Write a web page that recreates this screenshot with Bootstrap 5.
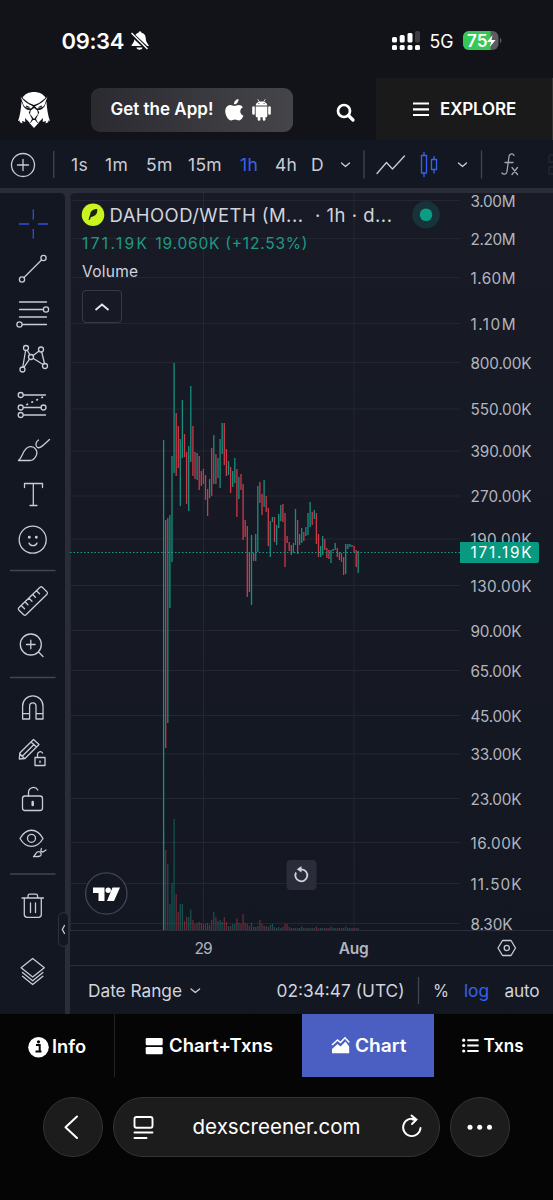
<!DOCTYPE html>
<html lang="en">
<head>
<meta charset="utf-8">
<meta name="viewport" content="width=device-width, initial-scale=1">
<title>DAHOOD/WETH</title>
<link href="https://cdn.jsdelivr.net/npm/bootstrap@5.3.0/dist/css/bootstrap.min.css" rel="stylesheet">
<style>
body{font-family:Inter,"Liberation Sans",sans-serif;background:#050506;color:#d1d4dc;width:553px;height:1200px;overflow:hidden;line-height:1}
svg{display:block;flex:none;overflow:visible}
.ln{fill:none;stroke:#c9ccd6;stroke-width:1.3;stroke-linecap:round;stroke-linejoin:round}
.topbg{background:#121219;color:#fff}
.status{height:78px}
.clock{font-size:22px;font-weight:600;letter-spacing:-.35px;width:68px;padding-left:61.5px;padding-top:3px;box-sizing:content-box}
.site-head{height:62px}
.app-btn{width:202px;height:44px;margin-top:9.5px;border-radius:9px;background:linear-gradient(90deg,#2b2a30,#454449);font-weight:600;font-size:17px;padding-left:19.5px}
.app-btn span{width:113.5px}
.explore{width:177px;background:#1a1a1a;border-right:1px solid #333;font-weight:600;font-size:17px;letter-spacing:-.15px}
.tools{height:48px;background:#131722;display:grid;grid-template-columns:53px 18px 34px 41px 42px 52px 35px 36px 26px 28px 112px 76px;font-size:17.5px;color:#c9ccd6;letter-spacing:.3px}
.tools span{padding-top:2px}
.tools .on{color:#3662f0}
.work{background:#2a2d38;height:826px;padding-top:5px}
.side{width:65px;background:#131722;border-top-right-radius:5px}
.toggle-tab{left:58px;top:724px;width:11px;height:35px;background:#131722;border:1px solid #2f323d;border-radius:6px}
.chart{width:483px;border-top-left-radius:5px;background:linear-gradient(#181b26,#131722)}
.legend{left:11px;top:10px}
.sym{height:24px}
.coll{width:40px;height:33px;margin:3px 0 0 1px;border:1px solid #363a45;border-radius:4px}
.axis-t{height:36px;border-top:1px solid #2a2e39;border-bottom:1px solid #2a2e39}
.foot{height:48px}
.tabs{height:63px;color:#fff;font-weight:600;font-size:18px}
.tabs>div{display:flex;align-items:center}
.t1{width:115px;border-right:1px solid #222;padding-left:28px}
.t2{width:187px;padding-left:31px}
.t3{width:132px;background:#4a5fc1;padding-left:30px}
.t4{padding-left:28px}
.browser{padding:20px 43px 0}
.pill{height:60px;border-radius:30px;background:#1c1c1c;border:1px solid #343434;color:#fff}
.rnd{width:60px}
.addr{width:327px;margin:0 10px}
text{font-family:Inter,"Liberation Sans",sans-serif}
</style>
</head>
<body>
<header class="topbg">
  <div class="status d-flex align-items-center">
    <div class="clock">09:34</div>
    <svg width="262" height="78" viewBox="129.500 0 262 78"><path fill="#fff" d="M131 46c0-2 3-3 3-8 0-3 2-5 4-5.300a1.500 1.500 0 0 1 3 0c3 .6 4.300 3 4.300 6 0 4 3 5.300 3 7.300zM136 47.500h6c-.5 3-5.500 3-6 0z"/><path d="M130 33l18 17" stroke="#121219" stroke-width="4"/><path d="M131 33l16 16" stroke="#fff" stroke-width="1.500"/></svg>
    <svg width="161" height="78" viewBox="392 0 161 78"><g fill="#fff"><rect x="392" y="37" width="5" height="5.500" rx="1.500"/><rect x="399.700" y="35" width="5" height="7.500" rx="1.500"/><rect x="407.500" y="33" width="5" height="9.500" rx="1.500"/><rect x="415" y="31" width="5" height="11.500" rx="1.500" fill="#3c3c42"/><rect x="392" y="45" width="5" height="5" rx="1.500"/><rect x="399.700" y="45" width="5" height="5" rx="1.500"/><rect x="407.500" y="45" width="5" height="5" rx="1.500"/><rect x="415" y="45" width="5" height="5" rx="1.500"/></g><text x="429.500" y="48.300" font-size="18.500" fill="#fff" textLength="24" lengthAdjust="spacingAndGlyphs">5G</text><rect x="463" y="31" width="35.500" height="19" rx="6" fill="#5b5b60"/><path d="M469 31h21.500v19H469a6 6 0 0 1-6-6v-7a6 6 0 0 1 6-6z" fill="#34c759"/><path d="M500 37.500q3 3 0 6z" fill="#5b5b60"/><text x="467" y="46.600" font-size="17" font-weight="600" fill="#fff" textLength="20.500" lengthAdjust="spacingAndGlyphs">75</text><path d="M492.500 35l-5.500 7h4l-1.200 5 5.700-7h-4z" fill="#fff"/></svg>
  </div>
  <div class="site-head d-flex align-items-stretch">
    <svg width="91" height="62" viewBox="0 78 91 62"><g fill="#fff"><path d="M22.500 98C26 90 42 90 45.500 98L39 103l-5 2-5-2z"/><path d="M20.500 96.500C24 102 29 104 33 106.500l-2 2c-4-1-6-1-7.500-3.500zM47.500 96.500C44 102 39 104 35 106.500l2 2c4-1 6-1 7.500-3.500z"/><path d="M21.500 101.500l2 5c2 3 4.500 3.500 6.500 3.500l-1.200 2.500 3.200 6.500-2 4-5-5 .3 4-3.300-1 .5 2.500-3-1.500.5-1.500-2 .5c2-5 3-12 3.500-19zM46.500 101.500l-2 5c-2 3-4.500 3.500-6.500 3.500l1.200 2.500-3.200 6.500 2 4 5-5-.3 4 3.300-1-.5 2.500 3-1.500-.5-1.500 2 .5c-2-5-3-12-3.500-19z"/><path d="M34 108l3.300 2.500.7 3.500-4 5-4-5 .7-3.500z"/><path d="M33 120h2l2.500 3 1.500-.5-5 5.500-5-5.500 1.500.5z"/></g><path d="M26 106l3.500 1.500M42 106l-3.500 1.500" stroke="#121219" stroke-width="1.200"/></svg>
    <div class="app-btn d-flex align-items-center"><span>Get the App!</span>
      <svg width="48" height="24" viewBox="224 98 48 24" fill="#fff"><path d="M238.500 99c.2 3-2 5.500-4.500 5.300-.2-2.500 2-5 4.500-5.300zM225.300 112c-.4-4 2-7 5.200-7 1.600 0 2.600.9 4 .9s2.500-1 4.300-1c1.600 0 3.200.9 4 2.300-3.800 2.300-3 7.200.7 8.500-1 2.400-2.600 4.700-4.500 4.700-1.500 0-2.200-.9-4-.9s-2.600.9-4 .9c-2.800 0-5.400-4.800-5.700-8.400z"/><path d="M255.700 106.500h11.600v9.500a1.200 1.200 0 0 1-1.200 1.200h-9.200a1.200 1.200 0 0 1-1.200-1.200zM255.700 105.500c.1-5.500 11.500-5.500 11.600 0z"/><rect x="252.200" y="106.300" width="2.600" height="8.500" rx="1.300"/><rect x="268.200" y="106.300" width="2.600" height="8.500" rx="1.300"/><rect x="257.700" y="114" width="2.700" height="6.700" rx="1.300"/><rect x="262.700" y="114" width="2.700" height="6.700" rx="1.300"/><path d="M257.700 99.300l2 3M265.300 99.300l-2 3" stroke="#fff" stroke-width=".8"/><circle cx="258.900" cy="103.500" r=".6" fill="#444"/><circle cx="264.100" cy="103.500" r=".6" fill="#444"/></svg>
    </div>
    <svg width="83" height="62" viewBox="293 78 83 62"><circle cx="344" cy="111" r="6" fill="none" stroke="#fff" stroke-width="2.700"/><path d="M348.500 115.500l4.500 4.500" stroke="#fff" stroke-width="3.200" stroke-linecap="round"/></svg>
    <div class="explore d-flex align-items-center">
      <svg width="64" height="62" viewBox="376 78 64 62"><path d="M413 103.500h16M413 109.300h16M413 115h16" stroke="#fff" stroke-width="2.200"/></svg><span>EXPLORE</span>
    </div>
  </div>
</header>
<nav class="tools align-items-center">
  <svg width="53" height="48" viewBox="0 140 53 48" class="ln"><circle cx="23" cy="165" r="11.500"/><path d="M17.500 165h11M23 159.500v11"/></svg>
  <svg width="2" height="48" viewBox="0 140 2 48"><path d="M.7 151v27" stroke="#434651" stroke-width="1.300"/></svg>
  <span>1s</span><span>1m</span><span>5m</span><span>15m</span><span class="on">1h</span><span>4h</span><span>D</span>
  <svg width="28" height="48" viewBox="337 140 28 48" class="ln"><path d="M341.500 163l4 3.500 4-3.500"/><path d="M364 151v27" stroke="#434651"/></svg>
  <svg width="112" height="48" viewBox="365 140 112 48" class="ln"><path d="M377 173.500l9.500-11 6 6.500 12-13"/><g stroke="#3662f0" stroke-linecap="butt"><path d="M421.500 155.500h5v17.500h-5zM424 152v3.500M424 173v4M431.500 159.500h5v10h-5zM434 156v3.500M434 169.500v4"/></g><path d="M458.500 163l4 3.500 4-3.500"/></svg>
  <svg width="76" height="48" viewBox="477 140 76 48" class="ln"><path d="M481.500 151v27" stroke="#434651"/><path stroke="#a3a6af" d="M502 173c1.500 2 4.500 1.500 5-1.500l2-15c.5-3 4-3.500 5-1M505 162.500h8M512 167.500l5.500 7M517.500 167.500l-5.500 7"/><path d="M550 155h4M549 156v6h5M549 167h5M549 168v6h5" stroke="#252934"/></svg>
</nav>
<main class="work d-flex position-relative">
  <aside class="side d-flex flex-column">
    <svg class="ln" width="65" height="53" viewBox="0 193 65 53"><path stroke="#3050dc" stroke-linecap="butt" d="M33.300 209.500v10M33.300 229v9.500M19 224h10M38 224h10"/></svg>
    <svg class="ln" width="65" height="45" viewBox="0 246 65 45"><circle cx="22" cy="279.500" r="2.600"/><circle cx="43.500" cy="258" r="2.600"/><path d="M24 277.500l17.500-17.500"/></svg>
    <svg class="ln" width="65" height="45" viewBox="0 291 65 45"><path d="M19.500 302h27M19.500 309.500h24M19.500 317h27M22.500 324.500h24"/><circle cx="46" cy="309.500" r="2.600"/><circle cx="19.500" cy="324.500" r="2.600"/></svg>
    <svg class="ln" width="65" height="45" viewBox="0 336 65 45"><path d="M22.800 367l2.800-16.500M27.300 350.300l2.500 4.500M33.200 355.500l5.800-4.500M41.700 352l2.800 11.500M33.500 358.500l9.500 6M29.500 359.200l-5.500 8"/><circle cx="26" cy="348" r="2.500"/><circle cx="41" cy="349.500" r="2.500"/><circle cx="31" cy="357" r="2.500"/><circle cx="22.500" cy="369.500" r="2.500"/><circle cx="45" cy="366" r="2.500"/></svg>
    <svg class="ln" width="65" height="46" viewBox="0 381 65 46"><path d="M23.500 395h22M23.500 407.500h17.500M23.500 415h22"/><path d="M27 404.500l17-8" stroke-dasharray=".5 5" stroke-width="1.800"/><circle cx="20.700" cy="395" r="2.500"/><circle cx="20.700" cy="407.500" r="2.500"/><circle cx="43.500" cy="407.500" r="2.500"/><circle cx="20.700" cy="415" r="2.500"/></svg>
    <svg class="ln" width="65" height="45" viewBox="0 427 65 45"><path d="M18.500 460.500C23 457 23 447.500 30 446.700c5-.5 8.500 4.300 6 9.300-1.500 3-3.500 4.500-6 4.500zM38.500 440c-3 2-3.500 6-1 7.500 2 1 3.500 0 12-8"/></svg>
    <svg class="ln" width="65" height="45" viewBox="0 472 65 45"><path d="M24.500 487.500v-4h18v4M33.300 483.500v22M30 505.500h7"/></svg>
    <svg class="ln" width="65" height="46" viewBox="0 517 65 46"><circle cx="32.700" cy="539.700" r="13.500"/><path d="M29 543c1 3.500 7 3.500 8 0"/><circle cx="29.300" cy="537.300" r=".8" fill="#c9ccd6"/><circle cx="36.300" cy="537.300" r=".8" fill="#c9ccd6"/></svg>
    <svg width="65" height="15" viewBox="0 563 65 15"><path d="M10 570.500h45.500" stroke="#434651" stroke-width="1.300"/></svg>
    <svg class="ln" width="65" height="45" viewBox="0 578 65 45"><path d="M40 587.200q1.200-1 2.300 0l4.700 4.700q1 1.100 0 2.300L26 614.700q-1.200 1-2.300 0l-4.900-4.700q-1-1.100 0-2.300zM36.500 590.700l3 3M32.700 594.500l2.700 2.700M29 598.200l3 3M25.200 602l2.700 2.700M21.500 605.700l3 3"/></svg>
    <svg class="ln" width="65" height="46" viewBox="0 623 65 46"><circle cx="30.800" cy="644.500" r="10.500"/><path d="M26.500 644.500h8.600M30.800 640.200v8.600M38.500 652l4.500 4.500"/></svg>
    <svg width="65" height="16" viewBox="0 669 65 16"><path d="M10 677.500h45.500" stroke="#434651" stroke-width="1.300"/></svg>
    <svg class="ln" width="65" height="45" viewBox="0 685 65 45"><path d="M22.600 719v-13a10.200 10.200 0 0 1 20.400 0v13h-7v-13a3.200 3.200 0 0 0-6.400 0v13zM22.600 713.700h7M36 713.700h7"/></svg>
    <svg class="ln" width="65" height="46" viewBox="0 730 65 46"><path d="M33.500 739.500l5.500 5-14 14-5.700.5.500-6zM31 742l5.500 5M34 744.500l-12 12M20 754l4.500 4.500M35 757.500h10v8h-10zM37.500 757.500v-3a2.700 2.700 0 0 1 5-1.500M40 761v1.500"/></svg>
    <svg class="ln" width="65" height="45" viewBox="0 776 65 45"><rect x="22.500" y="796" width="20" height="14.500" rx="2.500"/><path d="M28.500 796v-4a5 5 0 0 1 9.300-2"/><path d="M32.700 802v3" stroke-width="2.500"/></svg>
    <svg class="ln" width="65" height="45" viewBox="0 821 65 45"><path d="M20 838.500c6-11 17-11 23 0-6 10.500-17 10.500-23 0z"/><circle cx="31.500" cy="838.300" r="4"/><path d="M33.500 856.700c2-1 2-5 5-5 2.500 0 3.500 3 2 4-1 1-3 1-7 1zM41.500 848.500c-1.500 2.500 0 3.500 1 3.500s2-1 3.500-2"/></svg>
    <svg width="65" height="16" viewBox="0 866 65 16"><path d="M10 874h45.500" stroke="#434651" stroke-width="1.300"/></svg>
    <svg class="ln" width="65" height="48" viewBox="0 882 65 48"><path d="M22 898h21.500M28 898v-2q0-1.800 1.800-1.800h6q1.800 0 1.800 1.800v2M24.300 898v16.500q0 2.800 2.800 2.800h11.400q2.800 0 2.800-2.800V898M30.500 903v9.500M35.500 903v9.500"/></svg>
    <svg class="ln" width="65" height="84" viewBox="0 930 65 84"><path d="M32.700 958.500l11.600 9.300-11.600 9.200-11.600-9.200zM22.500 972.500l10.200 8.300 10.200-8.300M22.500 976.300l10.200 8.200 10.200-8.200"/></svg>
  </aside>
  <section class="chart ms-auto position-relative">
    <svg id="plot" width="483" height="737" viewBox="70 193 483 737"></svg>
    <div class="axis-t">
      <svg width="483" height="34" viewBox="70 931 483 34"><text x="203.500" y="954" font-size="15.500" fill="#b2b5be" text-anchor="middle" textLength="18">29</text><text x="353.700" y="954" font-size="15.500" font-weight="600" fill="#b2b5be" text-anchor="middle" textLength="30">Aug</text><g class="ln"><path d="M502.500 940.500h8.500l4.500 7.500-4.500 7.500h-8.500l-4.500-7.500z"/><circle cx="506.800" cy="948" r="2.600"/></g></svg>
    </div>
    <div class="foot d-flex align-items-center">
      <svg width="483" height="48" viewBox="70 966 483 48" fill="#d1d4dc" font-size="17.300"><text x="88" y="996.500" textLength="94">Date Range</text><path class="ln" d="M191 989l4.300 3.500 4.300-3.500"/><text x="276.500" y="996.500" textLength="128">02:34:47 (UTC)</text><path d="M418.500 977v27" stroke="#434651" stroke-width="1.300"/><text x="433" y="996.500" textLength="16" lengthAdjust="spacingAndGlyphs">%</text><text x="464" y="996.500" fill="#3662f0" textLength="25">log</text><text x="504.500" y="996.500" textLength="35">auto</text></svg>
    </div>
    <div class="legend position-absolute">
      <div class="sym d-flex align-items-center">
        <svg width="29" height="24" viewBox="81 203 29 24"><circle cx="93" cy="214.700" r="11.300" fill="#c8f51e"/><path d="M88.500 220c.8-3.500 1.700-5 2-7.500 1.500-2.500 3.500-3.700 6.700-3.500.3 2.500-.2 4.500-1.700 6-1.500 1.300-3 1.500-4.500 2l-1.500 3z" fill="#1a2410"/></svg>
        <svg width="350" height="24" viewBox="110 203 350 24" fill="#d1d4dc" font-size="18.500"><text x="109.500" y="221.600" textLength="193.500">DAHOOD/WETH (M...</text><text x="315" y="221.600" textLength="77">· 1h · d...</text><circle cx="426" cy="214.700" r="13.800" fill="#173238"/><circle cx="426" cy="214.700" r="6.300" fill="#0b9c84"/></svg>
      </div>
      <svg width="300" height="60" viewBox="81 227 300 60" font-size="15.500"><text x="82" y="248.500" fill="#1c9a86" textLength="65">171.19K</text><text x="155.500" y="248.500" fill="#1c9a86" textLength="152">19.060K (+12.53%)</text><text x="82" y="277.200" fill="#d1d4dc" textLength="56">Volume</text></svg>
      <div class="coll d-flex align-items-center justify-content-center"><svg width="16" height="10" viewBox="0 0 16 10"><path d="M1.500 8L8 2.500 14.500 8" fill="none" stroke="#e4e6ec" stroke-width="1.900"/></svg></div>
    </div>
  </section>
  <div class="toggle-tab position-absolute"><svg width="9" height="33" viewBox="59 913 9 33" class="ln"><path d="M64.500 925.500l-2.200 4 2.200 4"/></svg></div>
</main>
<nav class="tabs d-flex">
  <div class="t1"><svg width="24" height="63" viewBox="28 1014 24 63"><circle cx="38.500" cy="1047.200" r="10.300" fill="#fff"/><path d="M36 1045h3.700v6.300M35.500 1051.500h6" stroke="#050506" stroke-width="2" fill="none"/><circle cx="38.500" cy="1041.800" r="1.600" fill="#050506"/></svg><svg width="36" height="63" viewBox="52 1014 36 63" fill="#fff"><text x="52" y="1053" textLength="34" lengthAdjust="spacingAndGlyphs">Info</text></svg></div>
  <div class="t2"><svg width="130" height="63" viewBox="146 1014 130 63" fill="#fff"><rect x="145.700" y="1038" width="17" height="7.300" rx="1.300"/><rect x="145.700" y="1047" width="17" height="7.300" rx="1.300"/><text x="169" y="1051.500" textLength="104" lengthAdjust="spacingAndGlyphs">Chart+Txns</text></svg></div>
  <div class="t3"><svg width="90" height="63" viewBox="332 1014 90 63" fill="#fff"><path d="M332 1053.300v-4.300l5.500-5 3 2.500 5-5 3.700 5v6.800z"/><path d="M332 1045l5.500-5 3 2.500 4.500-4.700 4.300 4.700" fill="none" stroke="#fff" stroke-width="1.600"/><text x="355" y="1051.500" textLength="51.500" lengthAdjust="spacingAndGlyphs">Chart</text></svg></div>
  <div class="t4"><svg width="64" height="63" viewBox="462 1014 64 63" fill="#fff"><path d="M467.300 1040.200h11.300M467.300 1045.500h11.300M467.300 1051h11.300" stroke="#fff" stroke-width="2"/><circle cx="463.700" cy="1040.200" r="1.600"/><circle cx="463.700" cy="1045.500" r="1.600"/><circle cx="463.700" cy="1051" r="1.600"/><text x="483.500" y="1051.500" textLength="40" lengthAdjust="spacingAndGlyphs">Txns</text></svg></div>
</nav>
<footer class="browser d-flex">
  <div class="pill rnd"><svg width="58" height="58" viewBox="44 1098 58 58"><path d="M77 1116.500l-11.500 10.700L77 1138" fill="none" stroke="#fff" stroke-width="2" stroke-linecap="round" stroke-linejoin="round"/></svg></div>
  <div class="pill addr"><svg width="325" height="58" viewBox="114 1098 325 58"><g fill="none" stroke="#fff" stroke-width="1.900" stroke-linecap="round"><rect x="134.500" y="1117" width="18" height="10.700" rx="2"/><path d="M134.500 1132.500h18M134.500 1138h12"/><path d="M415.500 1119.500a8.700 8.700 0 1 0 5 8.500M415.500 1119.500h-3M411.500 1115.500l5 4-4.500 4.500"/></g><text x="192.500" y="1134" font-size="20.500" fill="#fff" textLength="168">dexscreener.com</text></svg></div>
  <div class="pill rnd"><svg width="58" height="58" viewBox="451 1098 58 58" fill="#fff"><circle cx="470" cy="1127.200" r="2.500"/><circle cx="479.700" cy="1127.200" r="2.500"/><circle cx="489.500" cy="1127.200" r="2.500"/></svg></div>
</footer>
<script src="https://cdn.jsdelivr.net/npm/bootstrap@5.3.0/dist/js/bootstrap.bundle.min.js"></script>
<script>
const G='#16907e',R='#cf3a4b';
// price axis: label, y, label width
const ticks=[['3.00M',201,45],['2.20M',239,45],['1.60M',278,45],['1.10M',324,45],['800.00K',363,61],['550.00K',409.5,61],['390.00K',451.5,61],['270.00K',496.5,61],['190.00K',539.5,61],['130.00K',586,61],['90.00K',631,51],['65.00K',671,51],['45.00K',716,51],['33.00K',754.5,51],['23.00K',799,51],['16.00K',843,51],['11.50K',884,51],['8.30K',924,42]];
// high and low of each hourly candle; g = up, r = down
const bars='g440-930 r520-748 g518-723 g515-608 g456-562 g363-473 r413-476 r426-468 g439-506 g400-458 r434-457 r452-504 g446-511 g386-462 r426-476 r452-479 g453-480 r456-490 r471-486 r469-484 r475-500 r489-516 g479-498 r448-496 g435-484 r454-484 g458-478 g439-488 g423-454 r423-465 r449-476 g461-475 r467-493 g471-487 g458-483 r469-517 g477-499 r474-490 r484-540 r520-537 r526-597 r553-592 g535-605 r553-561 g534-561 g486-552 r482-503 r494-515 g480-507 r496-512 r508-546 g521-557 g517-522 r517-542 g525-545 g514-528 g505-521 r504-522 r513-567 r536-543 r542-551 r545-555 g543-553 g509-545 r520-554 g534-545 g528-543 r532-541 g527-536 g513-535 g502-527 r512-525 g510-519 r513-544 r534-557 g546-557 g536-555 r539-550 r548-558 r550-559 g550-563 g549-551 g543-550 r548-557 r552-560 r553-562 r557-575 g544-574 g544-549 g544-547 r545-547 r546-552 r550-567 g551-573'.split(' ');
const vol=[100,80,66,26,47,111,36,18,26,26,9,13,13,20.5,10,6,7,8,7,6,6,7,5,10,18,13,9,10,8,13,8,4,4,6,6,11.5,7,6,16,7,6,4,7,3,3,4,10,6,4,4,3,5,6,3,2,3,2,3,6,6,3];
const X=i=>(163.6+i*2.093).toFixed(1);
let s='';
for(const t of ticks)s+=`<path d="M70 ${t[1]-.5}H460" stroke="#242731"/>`;
s+='<path d="M203.500 193V930M354 193V930M70.500 198V930" stroke="#242731"/>';
bars.forEach((b,i)=>{const v=vol[i]||(i%7==3?3.5:2);s+=`<path d="M${X(i)} 930v-${v}" stroke="${b[0]=='g'?G:R}" stroke-width="1.2" opacity=".5"/>`});
bars.forEach((b,i)=>{const [h,l]=b.slice(1).split('-');s+=`<path d="M${X(i)} ${h}V${l}" stroke="${b[0]=='g'?G:R}" stroke-width="1.3"/>`});
s+='<path d="M70 552.500H460" stroke="#1d9a88" stroke-dasharray="1.500 2"/>';
for(const t of ticks)s+=`<text x="470.500" y="${t[1]+5.5}" font-size="15.300" fill="#b2b5be" textLength="${t[2]}">${t[0]}</text>`;
s+='<path d="M460 542h77a2 2 0 0 1 2 2v17a2 2 0 0 1-2 2h-77z" fill="#089981"/><text x="470.500" y="558.300" font-size="15.300" fill="#fff" textLength="61">171.19K</text>';
s+='<circle cx="106.300" cy="893.500" r="20.700" fill="#131722" stroke="#434651" stroke-width="1.300"/><path d="M93 887.500h11.500V901H98.500v-8H93zM112.500 887.500h7.500l-6 13.500h-7z" fill="#fff"/><circle cx="108.200" cy="890.200" r="2.700" fill="#fff"/>';
s+='<rect x="286.500" y="860" width="30" height="30" rx="4" fill="#2a2d39"/><path d="M296 872.500a6 6 0 1 0 5.500-3.200h-2" fill="none" stroke="#d1d4dc" stroke-width="1.800"/><path d="M296.800 869.300l4.700-3.300v6.600z" fill="#d1d4dc"/>';
document.getElementById('plot').innerHTML=s;
</script>
</body>
</html>
